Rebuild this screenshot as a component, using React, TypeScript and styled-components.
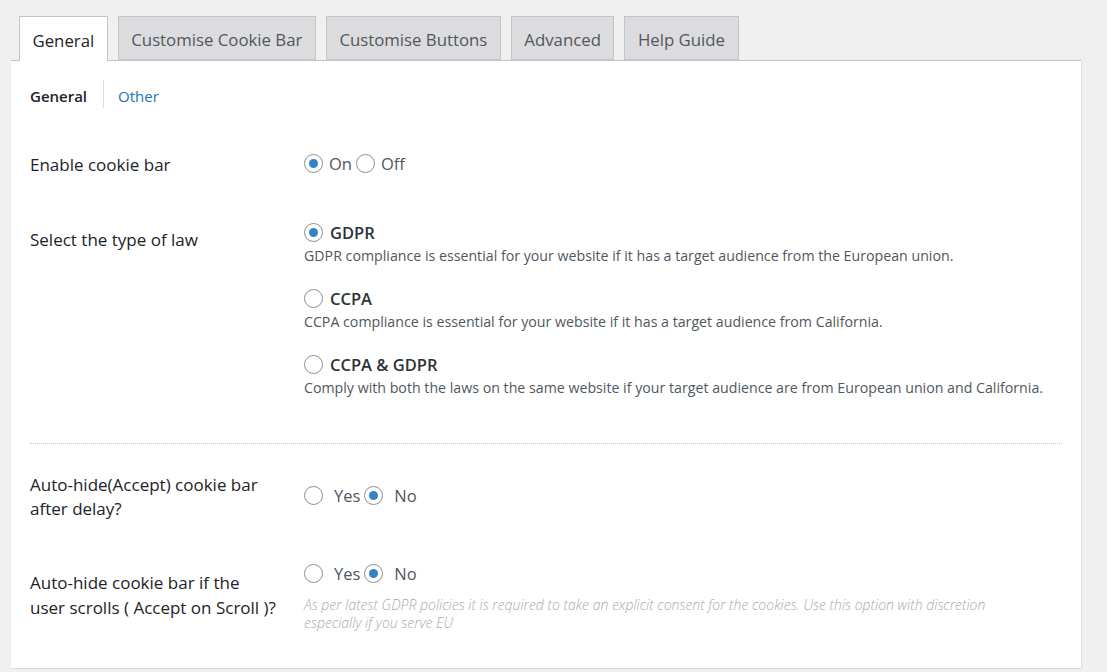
import React from "react";
import styled, { createGlobalStyle } from "styled-components";

const Global = createGlobalStyle`
  html, body { margin: 0; padding: 0; background: #f0f0f1; }
  body { font-family: "Open Sans", "Noto Sans", sans-serif; color: #1d2327; }
  * { box-sizing: border-box; }
`;

const Page = styled.div`
  width: 1107px;
  height: 672px;
  padding: 16px 26px 0 11px;
  overflow: hidden;
`;

const TabBar = styled.div`
  display: flex;
  gap: 10px;
  padding-left: 8px;
  height: 44px;
  position: relative;
  z-index: 1;
`;

const Tab = styled.div<{ $active?: boolean }>`
  height: ${(p) => (p.$active ? "45px" : "44px")};
  padding: 2px 12.5px 0;
  display: flex;
  align-items: center;
  font-size: 16.8px;
  border: 1px solid #c3c4c7;
  border-bottom: ${(p) => (p.$active ? "none" : "1px solid #c3c4c7")};
  background: ${(p) => (p.$active ? "#ffffff" : "#dcdcde")};
  color: ${(p) => (p.$active ? "#1d2327" : "#50575e")};
  font-weight: 500;
  white-space: nowrap;
`;

const Panel = styled.div`
  background: #fff;
  border-top: 1px solid #c3c4c7;
  border-bottom: 1px solid #dcdcde;
  box-shadow: 1px 0 1px rgba(0, 0, 0, 0.06);
  padding: 19px 19px 36px 19px;
`;

const SubNav = styled.div`
  display: flex;
  align-items: center;
  height: 28px;
  font-size: 15px;
`;

const SubItem = styled.span<{ $current?: boolean }>`
  color: ${(p) => (p.$current ? "#1d2327" : "#2271b1")};
  font-weight: ${(p) => (p.$current ? 600 : 400)};
  padding-right: ${(p) => (p.$current ? "16px" : "0")};
  margin-right: ${(p) => (p.$current ? "14px" : "0")};
  border-right: ${(p) => (p.$current ? "1px solid #dcdcde" : "none")};
  height: 28px;
  padding-top: 3px;
  display: flex;
  align-items: center;
`;

const Row = styled.div<{ $top: number }>`
  display: grid;
  grid-template-columns: 274px 1fr;
  align-items: start;
  margin-top: ${(p) => p.$top}px;
`;

const Label = styled.div<{ $pad: number; $lh?: number }>`
  padding-top: ${(p) => p.$pad}px;
  font-size: 17px;
  line-height: ${(p) => p.$lh ?? 24}px;
  font-weight: 500;
  color: #1d2327;
`;

const Control = styled.div<{ $pad: number }>`
  padding-top: ${(p) => p.$pad}px;
`;

const InlineGroup = styled.div`
  display: flex;
  align-items: center;
  height: 24px;
`;

const Choice = styled.label<{ $gap: number; $after: number }>`
  display: inline-flex;
  align-items: center;
  gap: ${(p) => p.$gap}px;
  margin-right: ${(p) => p.$after}px;
  font-size: 16.5px;
  color: #50575e;
`;

const RadioDot = styled.span<{ $checked?: boolean }>`
  width: 19px;
  height: 19px;
  border-radius: 50%;
  border: 1px solid #8c8f94;
  background: #fff;
  display: inline-flex;
  align-items: center;
  justify-content: center;
  flex-shrink: 0;
  &::after {
    content: "";
    width: 9px;
    height: 9px;
    border-radius: 50%;
    background: ${(p) => (p.$checked ? "#3582c4" : "transparent")};
  }
`;

const Option = styled.div<{ $top: number }>`
  margin-top: ${(p) => p.$top}px;
`;

const OptionHead = styled.div`
  display: flex;
  align-items: center;
  gap: 7px;
  height: 24px;
  font-size: 16.5px;
  font-weight: 600;
  color: #2c3338;
`;

const Desc = styled.div`
  margin-top: 2px;
  font-size: 14.2px;
  line-height: 20px;
  color: #50575e;
`;

const Help = styled.div`
  margin-top: 11px;
  font-size: 14px;
  line-height: 18px;
  font-style: italic;
  font-weight: 300;
  color: #a7aaad;
  max-width: 730px;
`;

const Divider = styled.div`
  margin-top: 45px;
  border-top: 1px dotted #c8c8c8;
`;

const Radio = ({ checked }: { checked?: boolean }) => <RadioDot $checked={checked} />;

export default function App() {
  return (
    <>
      <Global />
      <Page>
        <TabBar>
          <Tab $active>General</Tab>
          <Tab>Customise Cookie Bar</Tab>
          <Tab>Customise Buttons</Tab>
          <Tab>Advanced</Tab>
          <Tab>Help Guide</Tab>
        </TabBar>
        <Panel>
          <SubNav>
            <SubItem $current>General</SubItem>
            <SubItem>Other</SubItem>
          </SubNav>

          <Row $top={43}>
            <Label $pad={2}>Enable cookie bar</Label>
            <Control $pad={0}>
              <InlineGroup>
                <Choice $gap={6} $after={4}>
                  <Radio checked />
                  On
                </Choice>
                <Choice $gap={6} $after={0}>
                  <Radio />
                  Off
                </Choice>
              </InlineGroup>
            </Control>
          </Row>

          <Row $top={43}>
            <Label $pad={8}>Select the type of law</Label>
            <Control $pad={0}>
              <Option $top={0}>
                <OptionHead>
                  <Radio checked />
                  GDPR
                </OptionHead>
                <Desc>GDPR compliance is essential for your website if it has a target audience from the European union.</Desc>
              </Option>
              <Option $top={20}>
                <OptionHead>
                  <Radio />
                  CCPA
                </OptionHead>
                <Desc>CCPA compliance is essential for your website if it has a target audience from California.</Desc>
              </Option>
              <Option $top={20}>
                <OptionHead>
                  <Radio />
                  CCPA &amp; GDPR
                </OptionHead>
                <Desc>Comply with both the laws on the same website if your target audience are from European union and California.</Desc>
              </Option>
            </Control>
          </Row>

          <Divider />

          <Row $top={29}>
            <Label $pad={0}>
              Auto-hide(Accept) cookie bar
              <br />
              after delay?
            </Label>
            <Control $pad={10}>
              <InlineGroup>
                <Choice $gap={11} $after={4}>
                  <Radio />
                  Yes
                </Choice>
                <Choice $gap={11} $after={0}>
                  <Radio checked />
                  No
                </Choice>
              </InlineGroup>
            </Control>
          </Row>

          <Row $top={40}>
            <Label $pad={9} $lh={25}>
              Auto-hide cookie bar if the
              <br />
              user scrolls ( Accept on Scroll )?
            </Label>
            <Control $pad={0}>
              <InlineGroup>
                <Choice $gap={11} $after={4}>
                  <Radio />
                  Yes
                </Choice>
                <Choice $gap={11} $after={0}>
                  <Radio checked />
                  No
                </Choice>
              </InlineGroup>
              <Help>
                As per latest GDPR policies it is required to take an explicit consent for the cookies. Use this option with discretion especially if you serve EU
              </Help>
            </Control>
          </Row>
        </Panel>
      </Page>
    </>
  );
}
